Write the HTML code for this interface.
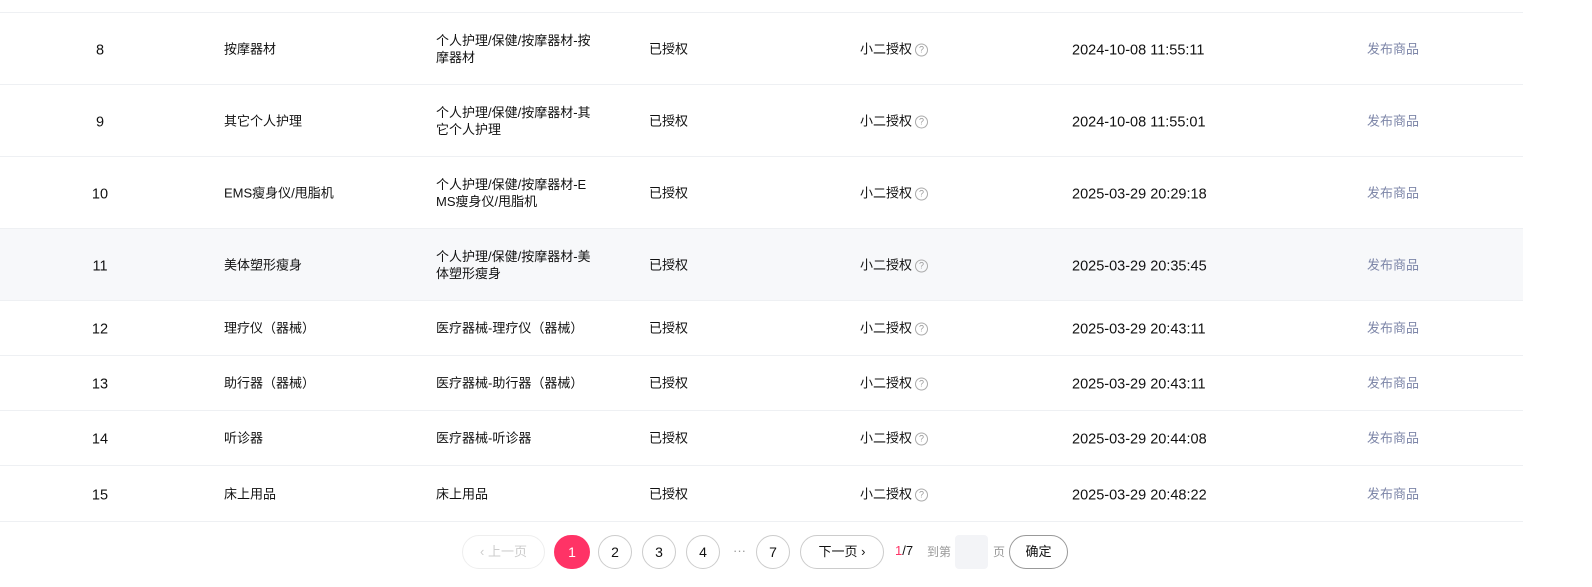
<!DOCTYPE html><html><head><meta charset="utf-8"><style>
body{margin:0;width:1592px;height:587px;background:#fff;font-family:"Liberation Sans","Noto Sans CJK SC",sans-serif;font-size:13px;color:#111;position:relative;overflow:hidden}
.row{position:absolute;left:0;width:1523px;border-bottom:1px solid #eef0f3}
.row div{position:absolute;top:50%;transform:translateY(-50%);line-height:17px}
.c0{left:80px;width:40px;text-align:center;font-size:14.5px;margin-top:2px}.c1{left:224px}.c2{left:436px;width:160px;word-break:break-all}.c3{left:649px}.c4{left:860px}.c5{left:1072px;font-size:14.5px;margin-top:2px}.c6{left:1367px;color:#7d86a8}
.q{display:inline-block;width:11px;height:11px;border:1px solid #aaa;border-radius:50%;font-size:9px;line-height:11px;text-align:center;color:#999;vertical-align:1px;margin-left:3px}
.pg{position:absolute;top:535px;height:32px;border:1px solid #ccc;border-radius:17px;text-align:center;line-height:32px;font-size:14px;box-sizing:content-box}
</style></head><body>
<div class="row" style="top:0;height:12px"></div>
<div class="row" style="top:13px;height:71px"><div class="c0">8</div><div class="c1">按摩器材</div><div class="c2">个人护理/保健/按摩器材-按摩器材</div><div class="c3">已授权</div><div class="c4">小二授权<span class="q">?</span></div><div class="c5">2024-10-08 11:55:11</div><div class="c6">发布商品</div></div>
<div class="row" style="top:85px;height:71px"><div class="c0">9</div><div class="c1">其它个人护理</div><div class="c2">个人护理/保健/按摩器材-其它个人护理</div><div class="c3">已授权</div><div class="c4">小二授权<span class="q">?</span></div><div class="c5">2024-10-08 11:55:01</div><div class="c6">发布商品</div></div>
<div class="row" style="top:157px;height:71px"><div class="c0">10</div><div class="c1">EMS瘦身仪/甩脂机</div><div class="c2">个人护理/保健/按摩器材-EMS瘦身仪/甩脂机</div><div class="c3">已授权</div><div class="c4">小二授权<span class="q">?</span></div><div class="c5">2025-03-29 20:29:18</div><div class="c6">发布商品</div></div>
<div class="row" style="top:229px;height:71px;background:#f7f8fa"><div class="c0">11</div><div class="c1">美体塑形瘦身</div><div class="c2">个人护理/保健/按摩器材-美体塑形瘦身</div><div class="c3">已授权</div><div class="c4">小二授权<span class="q">?</span></div><div class="c5">2025-03-29 20:35:45</div><div class="c6">发布商品</div></div>
<div class="row" style="top:301px;height:54px"><div class="c0">12</div><div class="c1">理疗仪（器械）</div><div class="c2">医疗器械-理疗仪（器械）</div><div class="c3">已授权</div><div class="c4">小二授权<span class="q">?</span></div><div class="c5">2025-03-29 20:43:11</div><div class="c6">发布商品</div></div>
<div class="row" style="top:356px;height:54px"><div class="c0">13</div><div class="c1">助行器（器械）</div><div class="c2">医疗器械-助行器（器械）</div><div class="c3">已授权</div><div class="c4">小二授权<span class="q">?</span></div><div class="c5">2025-03-29 20:43:11</div><div class="c6">发布商品</div></div>
<div class="row" style="top:411px;height:54px"><div class="c0">14</div><div class="c1">听诊器</div><div class="c2">医疗器械-听诊器</div><div class="c3">已授权</div><div class="c4">小二授权<span class="q">?</span></div><div class="c5">2025-03-29 20:44:08</div><div class="c6">发布商品</div></div>
<div class="row" style="top:466px;height:55px"><div class="c0">15</div><div class="c1">床上用品</div><div class="c2">床上用品</div><div class="c3">已授权</div><div class="c4">小二授权<span class="q">?</span></div><div class="c5">2025-03-29 20:48:22</div><div class="c6">发布商品</div></div>
<div class="pg" style="left:462px;width:81px;border-color:#eee;color:#ccc;font-size:13px">‹ 上一页</div>
<div class="pg" style="left:554px;width:34px;background:#ff3366;border-color:#ff3366;color:#fff">1</div>
<div class="pg" style="left:598px;width:32px">2</div>
<div class="pg" style="left:642px;width:32px">3</div>
<div class="pg" style="left:686px;width:32px">4</div>
<div style="position:absolute;left:733px;top:543px;color:#999">···</div>
<div class="pg" style="left:756px;width:32px">7</div>
<div class="pg" style="left:800px;width:82px;font-size:13px">下一页 ›</div>
<div style="position:absolute;left:895px;top:543px"><span style="color:#ff3366">1</span>/7</div>
<div style="position:absolute;left:927px;top:543px;color:#999;font-size:12px">到第</div>
<div style="position:absolute;left:955px;top:535px;width:33px;height:34px;background:#f3f4f7;border-radius:4px"></div>
<div style="position:absolute;left:993px;top:543px;color:#999;font-size:12px">页</div>
<div class="pg" style="left:1009px;width:57px;border-color:#999;font-size:13px">确定</div>
</body></html>
